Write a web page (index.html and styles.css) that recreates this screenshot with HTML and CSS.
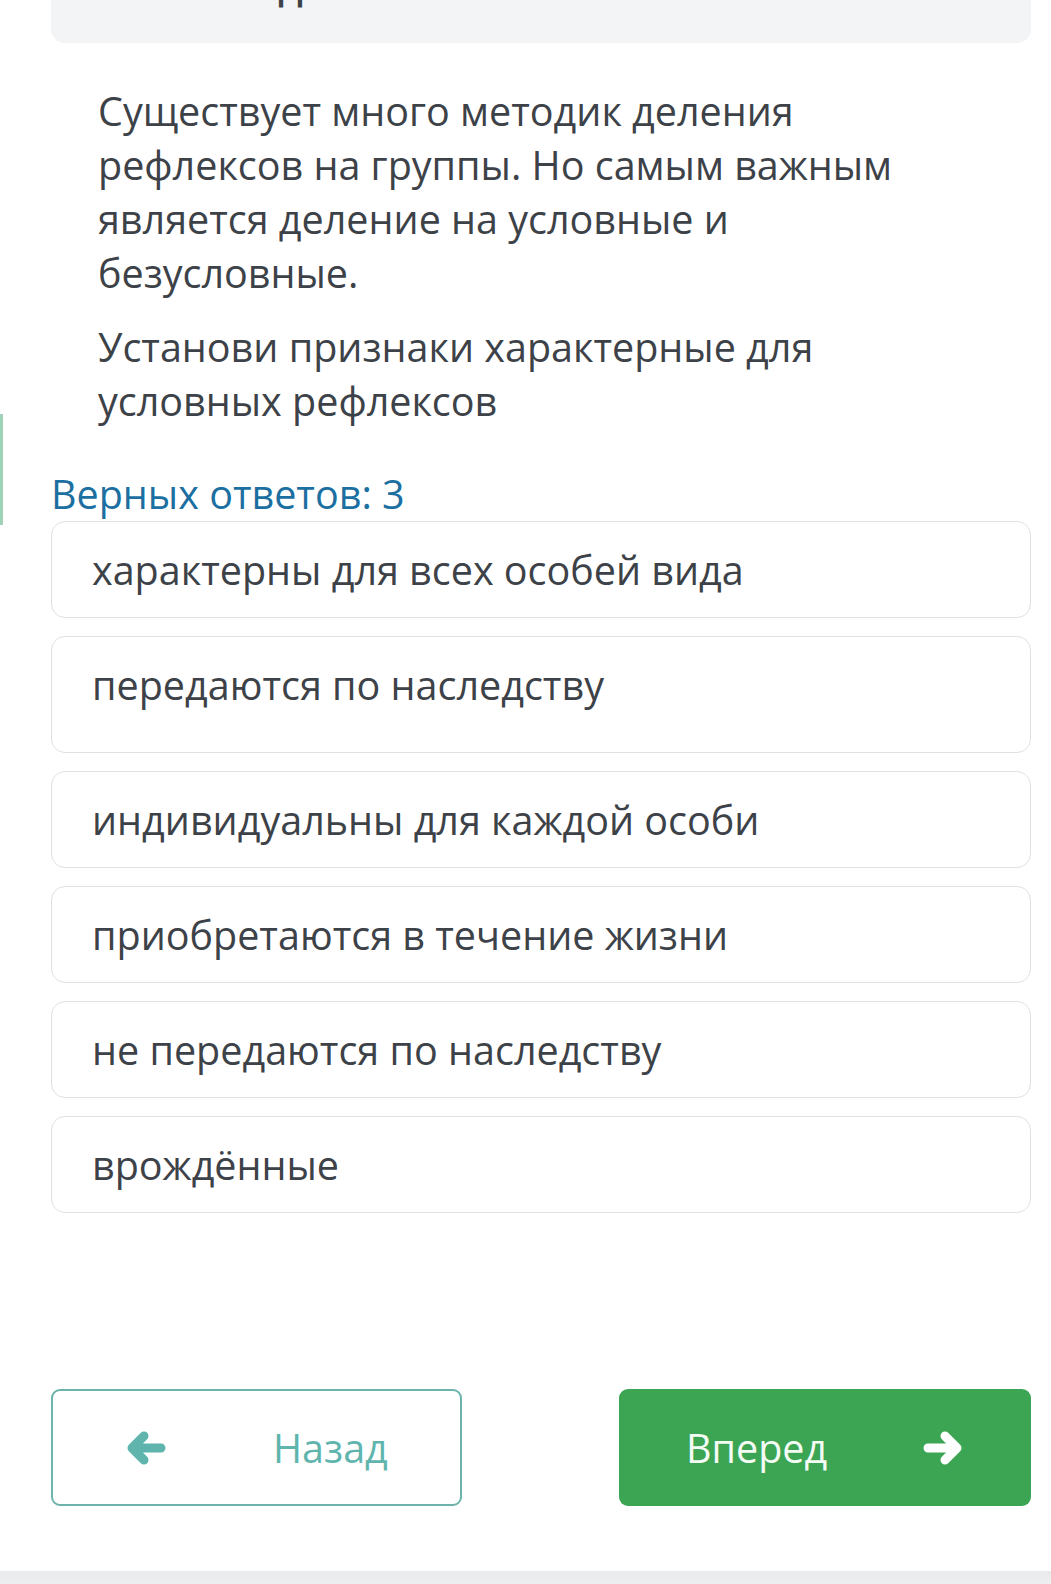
FILE: index.html
```html
<!DOCTYPE html>
<html lang="ru">
<head>
<meta charset="utf-8">
<title>Тест</title>
<link rel="stylesheet" href="styles.css">
</head>
<body>
<div class="side-mark"></div>
<main class="page">
  <div class="top-card"><h2 class="top-title">Задание</h2></div>
  <section class="question">
    <p>Существует много методик деления рефлексов на группы. Но самым важным является деление на условные и безусловные.</p>
    <p>Установи признаки характерные для условных рефлексов</p>
  </section>
  <div class="answers-label">Верных ответов: 3</div>
  <div class="options">
    <div class="option">характерны для всех особей вида</div>
    <div class="option option-tall">передаются по наследству</div>
    <div class="option">индивидуальны для каждой особи</div>
    <div class="option">приобретаются в течение жизни</div>
    <div class="option">не передаются по наследству</div>
    <div class="option">врождённые</div>
  </div>
  <div class="nav">
    <button class="btn btn-back">
      <svg class="arrow" viewBox="0 0 40 34" width="40" height="34"><path d="M35 17H6M18 5L6 17l12 12" fill="none" stroke="currentColor" stroke-width="9" stroke-linecap="round" stroke-linejoin="round"/></svg>
      <span class="btn-text">Назад</span>
    </button>
    <button class="btn btn-next">
      <span class="btn-text">Вперед</span>
      <svg class="arrow" viewBox="0 0 40 34" width="40" height="34"><path d="M5 17h29M22 5l12 12-12 12" fill="none" stroke="currentColor" stroke-width="9" stroke-linecap="round" stroke-linejoin="round"/></svg>
    </button>
  </div>
</main>
<div class="bottom-bar"></div>
</body>
</html>
```
FILE: styles.css
```css
html, body {
  margin: 0;
  padding: 0;
  background: #ffffff;
}
body {
  font-family: "Open Sans", "Noto Sans", sans-serif;
  color: #3d4248;
  font-size: 39.5px;
  line-height: 54px;
  width: 1051px;
  height: 1584px;
  overflow: hidden;
  position: relative;
}
.side-mark {
  position: absolute;
  left: 0;
  top: 414px;
  width: 3px;
  height: 111px;
  background: #9fd2b8;
}
.page {
  padding: 0 20px 0 51px;
}
.top-card {
  height: 43px;
  background: #f3f4f6;
  border-radius: 0 0 14px 14px;
  overflow: hidden;
  padding-left: 180px;
}
.top-title {
  margin: -42px 0 0 0;
  font-size: 39.5px;
  line-height: 54px;
  font-weight: 600;
  color: #3d4248;
}
.question {
  padding: 41px 0 0 47px;
}
.question p {
  margin: 0;
  max-width: 840px;
}
.question p + p {
  margin-top: 20px;
}
.answers-label {
  margin-top: 39px;
  color: #1c6fa1;
}
.options {
  display: flex;
  flex-direction: column;
  gap: 18px;
}
.option {
  border: 1px solid #dfe1e3;
  border-radius: 14px;
  padding: 21px 40px 20px 40px;
  color: #3d4248;
}
.option-tall {
  padding-bottom: 40px;
}
.nav {
  margin-top: 176px;
  display: flex;
  justify-content: space-between;
}
.btn {
  width: 411px;
  height: 117px;
  border-radius: 9px;
  font-family: "Open Sans", "Noto Sans", sans-serif;
  font-size: 39.5px;
  display: flex;
  align-items: center;
  padding: 0;
  cursor: pointer;
}
.btn-back {
  background: #ffffff;
  border: 2px solid #6db3ad;
  color: #5fb5ae;
  padding-left: 73px;
}
.btn-back .btn-text {
  margin-left: 107px;
}
.btn-next {
  background: #3ba553;
  border: none;
  color: #f4fbf5;
  padding-left: 67px;
  width: 412px;
}
.btn-next .arrow {
  margin-left: 96px;
  color: #ffffff;
}
.bottom-bar {
  position: absolute;
  left: 0;
  right: 0;
  bottom: 0;
  height: 13px;
  background: linear-gradient(#e9eaec, #eeeff1);
}
```
